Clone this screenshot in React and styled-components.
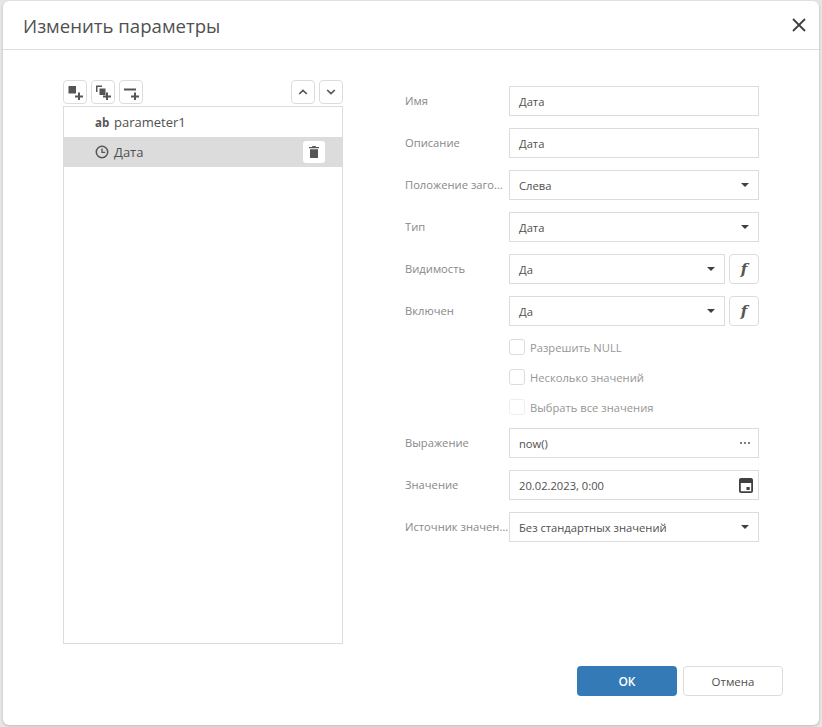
import React from 'react';
import styled, { createGlobalStyle } from 'styled-components';

const GlobalStyle = createGlobalStyle`
  html, body {
    margin: 0;
    padding: 0;
    height: 100%;
    background: #e6e6e6;
  }
  body {
    font-family: "Open Sans", "Noto Sans", sans-serif;
    font-size: 11.2px;
    color: #505050;
    padding-top: 1px;
  }
  * {
    box-sizing: border-box;
  }
`;

const plus = (cx, cy) =>
  `M${cx - 1} ${cy - 4}h2v3h3v2h-3v3h-2v-3h-3v-2h3z`;

const Square = () => (
  <svg width="16" height="16" viewBox="0 0 16 16">
    <rect x="1.500" y="2" width="7.500" height="7.500" fill="#555" />
    <path d={plus(12, 12.5)} fill="#555" />
  </svg>
);

const Squares = () => (
  <svg width="16" height="16" viewBox="0 0 16 16">
    <path d="M1 1.500h6V3H2.500v5H1z" fill="#555" />
    <rect x="4.500" y="4.500" width="6" height="6.500" fill="#555" />
    <path d={plus(12, 12.5)} fill="#555" />
  </svg>
);

const LinePlus = () => (
  <svg width="16" height="16" viewBox="0 0 16 16">
    <rect x="1" y="4.500" width="12" height="2" fill="#555" />
    <path d={plus(12, 12.5)} fill="#555" />
  </svg>
);

const Chevron = ({ up }) => (
  <svg width="10" height="6" viewBox="0 0 10 6">
    <path
      d={up ? 'M1.200 5L5 1.400 8.800 5' : 'M1.200 1L5 4.600 8.800 1'}
      fill="none"
      stroke="#555"
      strokeWidth="1.700"
    />
  </svg>
);

const Clock = () => (
  <svg width="14" height="14" viewBox="0 0 14 14">
    <circle cx="7" cy="7" r="5.700" fill="none" stroke="#555" strokeWidth="1.500" />
    <path d="M7 3.500V7.400h3.200" fill="none" stroke="#555" strokeWidth="1.300" />
  </svg>
);

const Trash = () => (
  <svg width="10" height="12" viewBox="0 0 10 12">
    <path d="M3.500 0h3l.5 1h3v1.300H0V1h3zM1 3.200h8V12H1z" fill="#555" />
  </svg>
);

const CalendarIcon = () => (
  <svg width="14" height="15" viewBox="0 0 14 15">
    <path
      d="M2 0h10c1.100 0 2 .9 2 2v11c0 1.100-.9 2-2 2H2c-1.100 0-2-.9-2-2V2C0 .9.900 0 2 0zM1.800 5v8.200h10.400V5z"
      fill="#404040"
    />
    <rect x="7.500" y="9" width="3.200" height="3" fill="#404040" />
  </svg>
);

const Dots = () => (
  <svg width="14" height="4" viewBox="0 0 14 4">
    <circle cx="2" cy="2" r="1" fill="#555" />
    <circle cx="6" cy="2" r="1" fill="#555" />
    <circle cx="10" cy="2" r="1" fill="#555" />
  </svg>
);

const Close = () => (
  <svg width="14" height="14" viewBox="0 0 14 14">
    <path d="M1 1l12 12M13 1L1 13" stroke="#404040" strokeWidth="1.800" fill="none" />
  </svg>
);

const fields = [
  { label: 'Имя', value: 'Дата' },
  { label: 'Описание', value: 'Дата' },
  { label: 'Положение заголовка', value: 'Слева', kind: 'select' },
  { label: 'Тип', value: 'Дата', kind: 'select' },
  { label: 'Видимость', value: 'Да', kind: 'select', expr: true },
  { label: 'Включен', value: 'Да', kind: 'select', expr: true },
];

const lowerFields = [
  { label: 'Выражение', value: 'now()', kind: 'dots' },
  { label: 'Значение', value: '20.02.2023, 0:00', kind: 'date' },
  { label: 'Источник значений', value: 'Без стандартных значений', kind: 'select' },
];

const checks = [
  { label: 'Разрешить NULL' },
  { label: 'Несколько значений' },
  { label: 'Выбрать все значения', faded: true },
];

const FieldRow = ({ field }) => (
  <Row>
    <Label>{field.label}</Label>
    <Control>
      <Input>
        <span>{field.value}</span>
        {field.kind === 'select' && <Caret />}
        {field.kind === 'dots' && <Dots />}
        {field.kind === 'date' && <CalendarIcon />}
      </Input>
      {field.expr && <ExprButton>f</ExprButton>}
    </Control>
  </Row>
);

const App = () => {
  return (
    <>
      <GlobalStyle />
      <Dialog>
        <Header>
          <Title>Изменить параметры</Title>
          <CloseButton>
            <Close />
          </CloseButton>
        </Header>
        <Body>
          <LeftColumn>
            <Toolbar>
              <ToolGroup>
                <ToolButton><Square /></ToolButton>
                <ToolButton><Squares /></ToolButton>
                <ToolButton><LinePlus /></ToolButton>
              </ToolGroup>
              <ToolGroup>
                <ToolButton><Chevron up /></ToolButton>
                <ToolButton><Chevron /></ToolButton>
              </ToolGroup>
            </Toolbar>
            <TreeList>
              <TreeItem>
                <TypeMark>ab</TypeMark>
                <span>parameter1</span>
              </TreeItem>
              <TreeItem $selected>
                <Clock />
                <span>Дата</span>
                <DeleteButton><Trash /></DeleteButton>
              </TreeItem>
            </TreeList>
          </LeftColumn>
          <Form>
            {fields.map((f) => (
              <FieldRow key={f.label} field={f} />
            ))}
            <Checks>
              {checks.map((c) => (
                <CheckRow key={c.label}>
                  <CheckBox $faded={c.faded} />
                  <CheckLabel>{c.label}</CheckLabel>
                </CheckRow>
              ))}
            </Checks>
            {lowerFields.map((f) => (
              <FieldRow key={f.label} field={f} />
            ))}
          </Form>
        </Body>
        <Footer>
          <PrimaryButton>ОК</PrimaryButton>
          <SecondaryButton>Отмена</SecondaryButton>
        </Footer>
      </Dialog>
    </>
  );
};

const Dialog = styled.div`
  display: flex;
  flex-direction: column;
  width: 816px;
  height: 724px;
  margin-left: 3px;
  background: #fff;
  border-radius: 6px;
  box-shadow: 0 1px 3px rgba(0, 0, 0, 0.2);
`;
const Header = styled.header`
  display: flex;
  align-items: center;
  justify-content: space-between;
  flex: none;
  height: 49px;
  padding: 0 13px 0 20px;
  border-bottom: 1px solid #dcdcdc;
`;
const Title = styled.h1`
  margin: 0;
  font-size: 18.600px;
  font-weight: 400;
  color: #505050;
`;
const CloseButton = styled.div`
  display: flex;
  width: 14px;
  height: 14px;
`;
const Body = styled.div`
  display: flex;
  flex: none;
  height: 616px;
  padding: 30px 0 0 60px;
`;
const LeftColumn = styled.div`
  display: flex;
  flex-direction: column;
  width: 280px;
`;
const Toolbar = styled.div`
  display: flex;
  justify-content: space-between;
  height: 26px;
`;
const ToolGroup = styled.div`
  display: flex;
  gap: 4px;
`;
const ToolButton = styled.div`
  display: flex;
  align-items: center;
  justify-content: center;
  width: 24px;
  height: 24px;
  border: 1px solid #dcdcdc;
  border-radius: 4px;
  background: #fff;
`;
const TreeList = styled.div`
  width: 280px;
  height: 538px;
  border: 1px solid #dcdcdc;
`;
const TreeItem = styled.div`
  display: flex;
  align-items: center;
  gap: 5px;
  height: 30px;
  padding: 0 17px 0 31px;
  font-size: 13px;
  color: #505050;
  background: ${(p) => (p.$selected ? '#dcdcdc' : 'transparent')};
`;
const TypeMark = styled.b`
  width: 14px;
  font-size: 11.500px;
  font-weight: 700;
  color: #555;
`;
const DeleteButton = styled.div`
  display: flex;
  align-items: center;
  justify-content: center;
  width: 22px;
  height: 22px;
  margin-left: auto;
  border-radius: 3px;
  background: #fff;
`;
const Form = styled.div`
  display: flex;
  flex-direction: column;
  gap: 12px;
  width: 354px;
  margin-left: 62px;
  padding-top: 6px;
`;
const Row = styled.div`
  display: flex;
  height: 30px;
`;
const Label = styled.div`
  width: 104px;
  padding-top: 7px;
  overflow: hidden;
  color: #888;
  white-space: nowrap;
  text-overflow: ellipsis;
`;
const Control = styled.div`
  display: flex;
  flex: 1;
  gap: 4px;
`;
const Input = styled.div`
  display: flex;
  flex: 1;
  align-items: center;
  justify-content: space-between;
  padding: 0 5px 0 9px;
  color: #505050;
  border: 1px solid #dcdcdc;
`;
const Caret = styled.i`
  width: 0;
  height: 0;
  margin-right: 4px;
  border-top: 4px solid #404040;
  border-left: 4px solid transparent;
  border-right: 4px solid transparent;
`;
const ExprButton = styled.div`
  display: flex;
  align-items: center;
  justify-content: center;
  width: 30px;
  font-family: "DejaVu Serif", serif;
  font-size: 15px;
  font-style: italic;
  font-weight: 700;
  color: #555;
  border: 1px solid #dcdcdc;
  border-radius: 4px;
`;
const Checks = styled.div`
  display: flex;
  flex-direction: column;
  margin: -6px 0 -6px 104px;
`;
const CheckRow = styled.div`
  display: flex;
  align-items: center;
  gap: 5px;
  height: 30px;
`;
const CheckBox = styled.div`
  width: 16px;
  height: 16px;
  border: 1px solid ${(p) => (p.$faded ? '#eeeeee' : '#dcdcdc')};
  border-radius: 3px;
`;
const CheckLabel = styled.span`
  color: #969696;
`;
const Footer = styled.footer`
  display: flex;
  justify-content: flex-end;
  gap: 6px;
  padding-right: 36px;
`;
const PrimaryButton = styled.div`
  display: flex;
  align-items: center;
  justify-content: center;
  width: 100px;
  height: 30px;
  font-size: 12px;
  font-weight: 600;
  color: #fff;
  background: #337ab7;
  border-radius: 4px;
`;
const SecondaryButton = styled(PrimaryButton)`
  font-size: 11.500px;
  font-weight: 400;
  color: #505050;
  background: #fff;
  border: 1px solid #dcdcdc;
`;

export default App;
